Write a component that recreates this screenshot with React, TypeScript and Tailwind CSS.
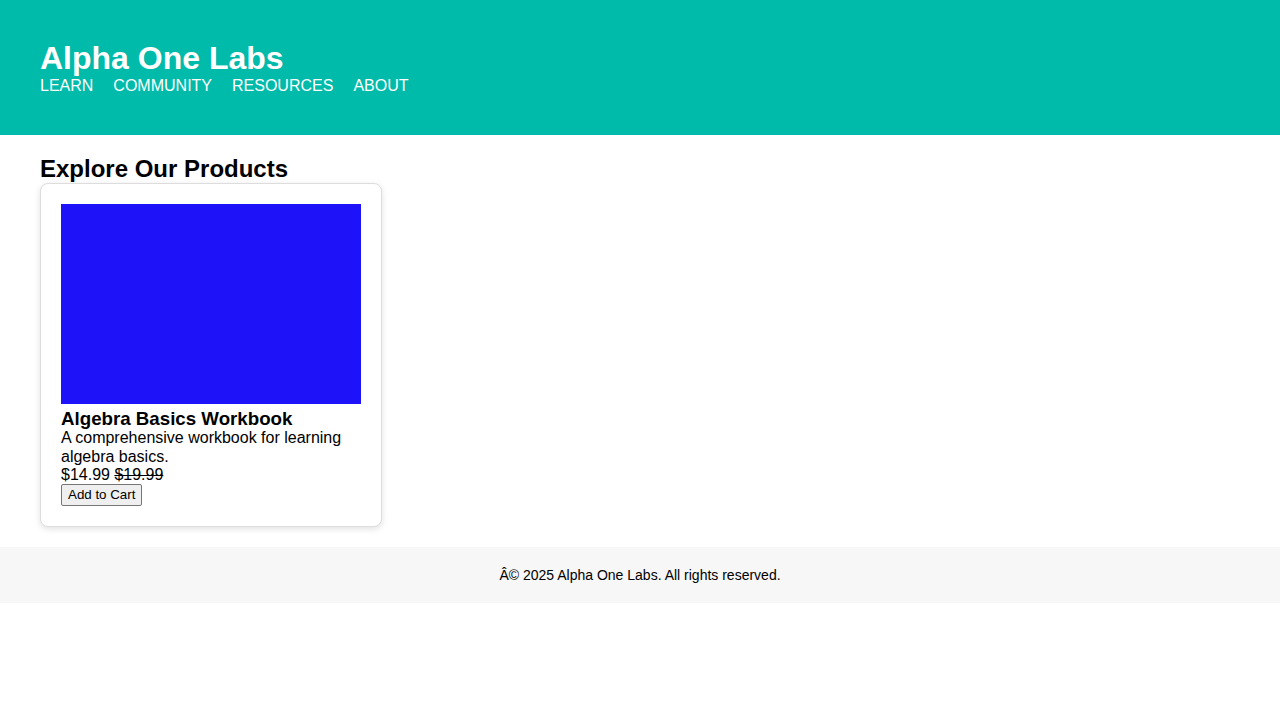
import React from 'react';

const products = [
  {
    name: 'Algebra Basics Workbook',
    description: 'A comprehensive workbook for learning algebra basics.',
    price: '$14.99',
    oldPrice: '$19.99',
  },
];

export default function App() {
  return (
    <div className="min-h-screen bg-white text-black font-['Liberation_Sans',Arial,sans-serif]">
      <header className="bg-[#00baaa] px-10 py-10 text-white">
        <h1 className="text-[32px] font-bold leading-[1.15]">Alpha One Labs</h1>
        <nav className="flex gap-5 text-base leading-[1.15]">
          <a href="#">LEARN</a>
          <a href="#">COMMUNITY</a>
          <a href="#">RESOURCES</a>
          <a href="#">ABOUT</a>
        </nav>
      </header>

      <main className="px-10 py-5">
        <h2 className="text-2xl font-bold leading-[1.15]">Explore Our Products</h2>
        <div className="flex flex-wrap gap-5">
          {products.map((p) => (
            <div
              key={p.name}
              className="w-[342px] rounded-lg border border-[#dddddd] bg-white p-5 shadow-[0_2px_6px_rgba(0,0,0,0.12)]"
            >
              <div className="h-[200px] w-[300px] bg-[#1e12f8]" />
              <h3 className="mt-1 text-[18.72px] font-bold leading-[1.15]">{p.name}</h3>
              <p className="text-base leading-[1.15]">{p.description}</p>
              <p className="text-base leading-[1.15]">
                {p.price} <span className="line-through">{p.oldPrice}</span>
              </p>
              <button className="block rounded-[2px] border border-[#767676] bg-[#efefef] px-[6px] py-[2px] text-[13.33px] leading-[1.15]">
                Add to Cart
              </button>
            </div>
          ))}
        </div>
      </main>

      <footer className="bg-[#f7f7f7] py-5 text-center text-sm leading-[1.15]">
        Â© 2025 Alpha One Labs. All rights reserved.
      </footer>
    </div>
  );
}
